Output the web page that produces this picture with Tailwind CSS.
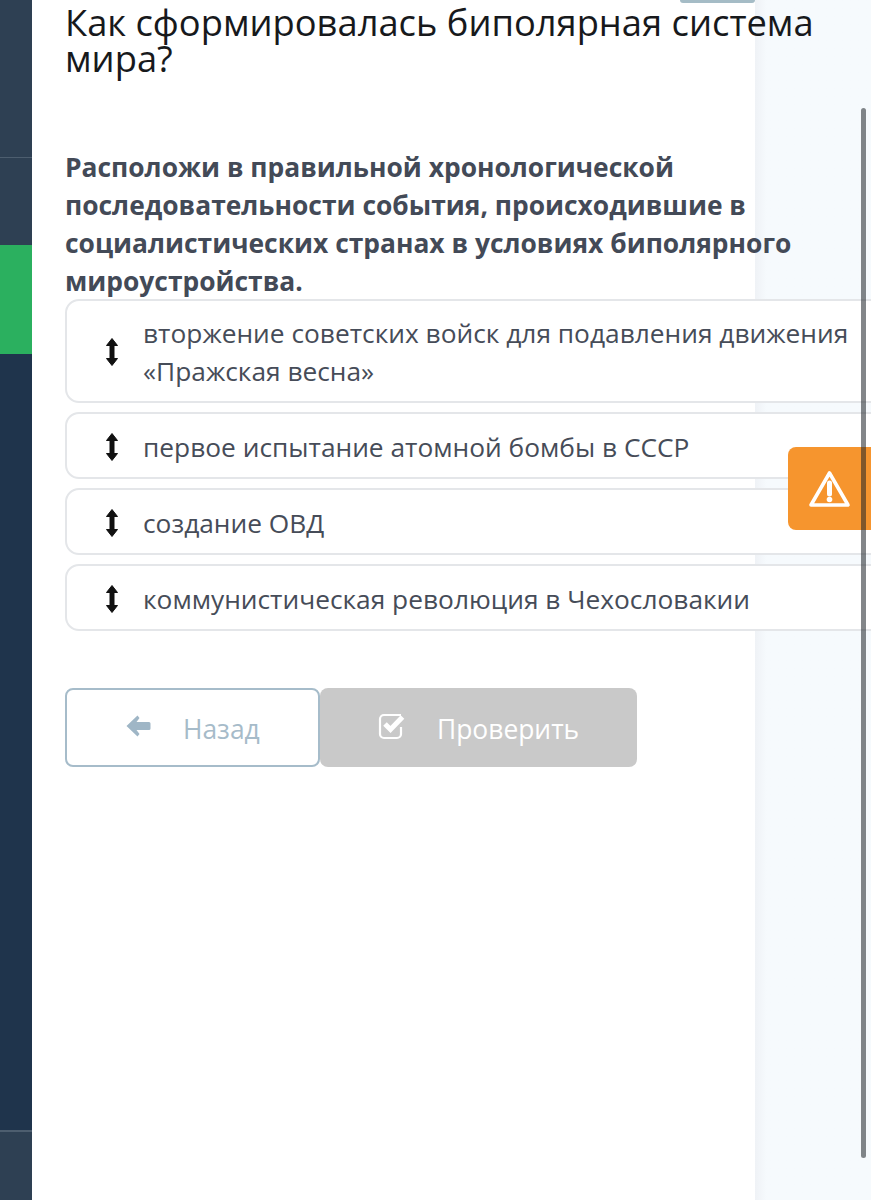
<!DOCTYPE html>
<html lang="ru">
<head>
    <meta charset="UTF-8">
    <meta name="viewport" content="width=device-width, initial-scale=1.0">
    <title>Как сформировалась биполярная система мира?</title>
    <script src="https://cdn.jsdelivr.net/npm/@tailwindcss/browser@4"></script>
</head>
<body class="relative h-[1200px] w-[871px] overflow-hidden bg-white font-['Open_Sans',sans-serif]">
    <div class="flex h-[1200px]">
        <!-- sidebar -->
        <div class="flex w-8 shrink-0 flex-col bg-[#1f344c]">
            <div class="h-[158px] border-b border-[#4d5e6f] bg-[#2e4053]"></div>
            <div class="h-[87px] bg-[#2e4053]"></div>
            <div class="h-[109px] bg-[#2bb05f]"></div>
            <div class="flex-1"></div>
            <div class="h-[70px] border-t-2 border-[#4d5e6f] bg-[#2e4053]"></div>
        </div>

        <!-- main column -->
        <div class="relative z-10 w-[723px] shrink-0 bg-white pl-[33px]">
            <h1 class="w-[770px] pt-[4px] text-[36.3px] leading-[36px] text-[#17191c]">Как сформировалась биполярная система мира?</h1>
            <p class="mt-[72px] w-[745px] text-[26.4px] leading-[38px] font-bold text-[#434a57]">Расположи в правильной хронологической последовательности события, происходившие в социалистических странах в условиях биполярного мироустройства.</p>

            <div class="-mt-px flex w-[830px] flex-col gap-[9px]">
                <div class="flex h-[104px] items-center rounded-[14px] border-2 border-[#e4e6e9] bg-white pt-px">
                    <svg class="ml-[39px] h-[28px] w-[12px] shrink-0" viewBox="0 0 12 28"><path d="M6 .5 11.500 7.500H8V20.500H11.500L6 27.500 .5 20.500H4V7.500H.5Z" fill="#111" stroke="#111" stroke-linejoin="round"/></svg>
                    <span class="ml-[25px] w-[730px] text-[26.3px] leading-[38px] text-[#464c58]">вторжение советских войск для подавления движения «Пражская весна»</span>
                </div>
                <div class="flex h-[67px] items-center rounded-[14px] border-2 border-[#e4e6e9] bg-white pt-[2px]">
                    <svg class="ml-[39px] h-[28px] w-[12px] shrink-0" viewBox="0 0 12 28"><path d="M6 .5 11.500 7.500H8V20.500H11.500L6 27.500 .5 20.500H4V7.500H.5Z" fill="#111" stroke="#111" stroke-linejoin="round"/></svg>
                    <span class="ml-[25px] text-[26.3px] leading-[38px] text-[#464c58]">первое испытание атомной бомбы в СССР</span>
                </div>
                <div class="flex h-[67px] items-center rounded-[14px] border-2 border-[#e4e6e9] bg-white pt-[2px]">
                    <svg class="ml-[39px] h-[28px] w-[12px] shrink-0" viewBox="0 0 12 28"><path d="M6 .5 11.500 7.500H8V20.500H11.500L6 27.500 .5 20.500H4V7.500H.5Z" fill="#111" stroke="#111" stroke-linejoin="round"/></svg>
                    <span class="ml-[25px] text-[26.3px] leading-[38px] text-[#464c58]">создание ОВД</span>
                </div>
                <div class="flex h-[67px] items-center rounded-[14px] border-2 border-[#e4e6e9] bg-white pt-[2px]">
                    <svg class="ml-[39px] h-[28px] w-[12px] shrink-0" viewBox="0 0 12 28"><path d="M6 .5 11.500 7.500H8V20.500H11.500L6 27.500 .5 20.500H4V7.500H.5Z" fill="#111" stroke="#111" stroke-linejoin="round"/></svg>
                    <span class="ml-[25px] text-[26.3px] leading-[38px] text-[#464c58]">коммунистическая революция в Чехословакии</span>
                </div>
            </div>

            <div class="mt-[57px] flex">
                <button class="flex h-[79px] w-[255px] items-center rounded-[8px] border-2 border-[#a6bcca] bg-white pl-[59px] text-[26.4px] text-[#a6bbc9]">
                    <svg class="h-[24px] w-[26px] -translate-x-px -translate-y-[2px]" viewBox="0 0 26 24"><path d="M12.500 1.500 1.500 12 12.500 22.500 14.500 20 11.500 16H24a1.500 1.500 0 0 0 1.500-1.500V9.500A1.500 1.500 0 0 0 24 8H11.500L14.500 4Z" fill="#9fb6c6"/></svg>
                    <span class="ml-[31px] translate-y-[2px]">Назад</span>
                </button>
                <button class="flex h-[79px] w-[317px] items-center rounded-[8px] bg-[#c9c9c9] pl-[58px] text-[26.4px] text-white">
                    <svg class="h-[28px] w-[28px] -translate-y-[2px]" viewBox="0 0 28 28" fill="none" stroke="#fff"><path d="M23 15V22a4 4 0 0 1-4 4H6a4 4 0 0 1-4-4V7a4 4 0 0 1 4-4h17" stroke-width="2.200"/><path d="M7 12 12.500 17.500 24.500 5" stroke-width="5"/></svg>
                    <span class="ml-[31px] translate-y-[2px]">Проверить</span>
                </button>
            </div>
        </div>

        <!-- right gutter -->
        <div class="flex-1 bg-linear-to-r from-[#eff2f6] to-[#f6fafd] to-10%"></div>
    </div>

    <div class="absolute top-0 left-[680px] z-20 h-[3px] w-[75px] rounded-b-[6px] bg-[#a5bcc6]"></div>
    <div class="absolute top-[447px] left-[788px] z-20 flex h-[83px] w-[83px] items-center justify-center rounded-l-[8px] bg-[#f6952e]">
        <svg class="h-[38px] w-[42px] -translate-x-[0.5px]" viewBox="0 0 42 38" fill="none" stroke="#fff"><path d="M21 3 39.500 35H2.500Z" stroke-width="3.600" stroke-linejoin="round"/><path d="M21 13V24" stroke-width="5" stroke-linecap="round"/><circle cx="21" cy="29.500" r="2.800" fill="#fff" stroke="none"/></svg>
    </div>
    <div class="absolute top-[108px] left-[861px] z-30 h-[1050px] w-[5px] rounded-full bg-[#1e2328]/55"></div>
</body>
</html>
